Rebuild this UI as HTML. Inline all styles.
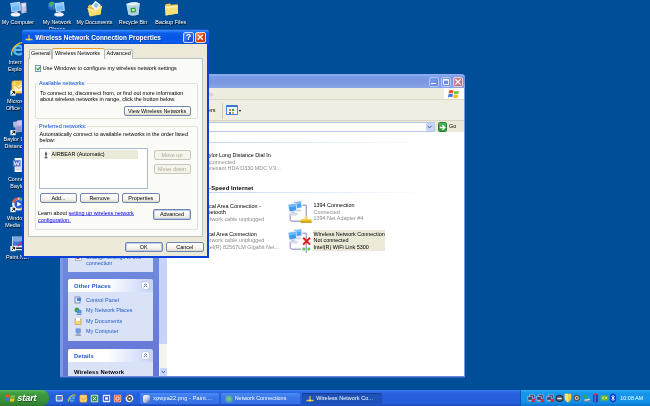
<!DOCTYPE html>
<html><head><meta charset="utf-8">
<style>
*{margin:0;padding:0;box-sizing:border-box}
html,body{width:650px;height:406px;overflow:hidden;background:#004e98}
body{font-family:"Liberation Sans",sans-serif;font-size:5.45px;color:#000;position:relative;line-height:1}
.a{position:absolute}
.t{position:absolute;white-space:nowrap;line-height:7px;height:7px}
.w{color:#fff}
.g{color:#8c8c8c}
.b{font-weight:bold}
.bb{font-weight:bold;font-size:5.8px;letter-spacing:.12px}
.btn{position:absolute;border:1px solid #7088b0;border-radius:2px;background:linear-gradient(#fff,#f3f2ea 70%,#dcd8c8);text-align:center;font-size:5.45px;line-height:8px;height:10px}
.btn.dis{border-color:#c9c7ba;color:#aca899;background:#f5f4ea}
.dl{position:absolute;color:#fff;text-align:center;font-size:5.4px;line-height:7px;width:44px;text-shadow:0.5px 0.5px 0.5px #000}
.ic{position:absolute;border-radius:2px}
.box{position:absolute;border:1px solid #e2e1d6;border-radius:2px}
.lk{color:#215dc6}
</style></head><body>
<div id="root" style="position:absolute;left:0;top:0;width:650px;height:406px;overflow:hidden;will-change:transform">

<!-- desktop icons top row -->
<svg class="a" style="left:9px;top:0" width="19" height="18" viewBox="0 0 19 18">
 <ellipse cx="6.5" cy="14.6" rx="4.8" ry="2" fill="#e8ecf8"/><ellipse cx="6.5" cy="14.2" rx="3.2" ry="1.2" fill="#fff"/>
 <path d="M12 3 L17.2 2.4 L17.6 12.4 L12.6 13.4Z" fill="#c4c4e6"/><path d="M13.2 4 L16.4 3.6 L16.5 6 L13.3 6.4Z" fill="#e8e8f8"/><path d="M11.2 3.4 L12 3 L12.6 13.4 L11.8 12.8Z" fill="#9c98cc"/>
 <path d="M1.2 3 L11 1.8 L11.8 10.6 L2.6 12.2Z" fill="#d4dcf4"/><path d="M2.2 3.8 L10.2 2.8 L10.8 10 L3.4 11.2Z" fill="#68b8f8"/><path d="M2.2 3.8 L10.2 2.8 L10.4 5.5 L2.6 7Z" fill="#8ccafb"/>
 <path d="M5.5 11.6 L8.5 11.2 L8.8 13.6 L5.2 13.8Z" fill="#c8cce4"/><circle cx="16.2" cy="11.3" r=".6" fill="#50c050"/>
</svg>
<div class="dl" style="left:-4px;top:19.3px">My Computer</div>
<svg class="a" style="left:47px;top:0" width="19" height="18" viewBox="0 0 19 18">
 <ellipse cx="12" cy="14.6" rx="4.8" ry="2" fill="#e8ecf8"/><ellipse cx="12" cy="14.2" rx="3.2" ry="1.2" fill="#fff"/>
 <circle cx="5.2" cy="5.8" r="4.4" fill="#2462d4"/><circle cx="4.4" cy="4.8" r="2.6" fill="#3c80e8"/><path d="M3.4 2.2 Q5.4 1.4 6.8 2.4 Q7.2 4 5.8 4.8 Q4.8 5 4.6 6.4 Q3.6 6.6 3 5.4 Q2.4 3.6 3.4 2.2Z" fill="#3cc03c"/><path d="M6.2 7 Q7.8 6.6 8.4 7.8 Q7.6 9.4 6.2 9.2Z" fill="#30a830"/>
 <path d="M7.6 3.2 L17 2 L17.8 10.8 L9 12.2Z" fill="#d4dcf4"/><path d="M8.6 4 L16.2 3 L16.8 10.2 L9.8 11.3Z" fill="#68b8f8"/><path d="M8.6 4 L16.2 3 L16.4 5.6 L9 7Z" fill="#8ccafb"/>
 <path d="M11 11.8 L14 11.4 L14.3 13.6 L10.7 13.8Z" fill="#c8cce4"/>
</svg>
<div class="dl" style="left:35px;top:19.3px">My Network<br>Places</div>
<svg class="a" style="left:86px;top:0" width="18" height="18" viewBox="0 0 18 18">
 <path d="M2 6 L4 4.5 L7 5.5 L15 5.5 L15 14 L3 15.5Z" fill="#e8c048"/>
 <path d="M5 6 L9.5 .8 L14.8 5 L10 11Z" fill="#f4f8fc"/><path d="M7.5 5.5 L9.8 2.6 L12.8 5 L10.3 8.3Z" fill="#8cbcf0"/>
 <path d="M1.5 8 L8.5 10.6 L16.2 5.8 L14.4 14.4 L4 16.4Z" fill="#f8dc70"/><path d="M1.5 8 L8.5 10.6 L16.2 5.8 L15.8 7.6 L8.6 12 L1.9 9.6Z" fill="#fcf0a8"/>
</svg>
<div class="dl" style="left:72.5px;top:19.3px">My Documents</div>
<svg class="a" style="left:124px;top:0" width="18" height="18" viewBox="0 0 18 18">
 <path d="M2.2 4 Q9 1 16 3.4 L14.4 14.4 Q9 16.4 4.4 14.6Z" fill="#c4dcea"/><path d="M2.2 4 Q9 1 16 3.4 Q9 6.4 2.2 4Z" fill="#e8f4fa"/><path d="M3.2 5.6 Q9 7.6 15.2 5 L14.4 14.4 Q9 16.4 4.4 14.6Z" fill="#b4d0e4"/>
 <path d="M6.5 8 L11.5 7.4 L12 12 L7 12.8Z" fill="#30a838"/><path d="M8 9.2 L10.4 8.9 L10.6 10.8 L8.3 11.2Z" fill="#d8f0d8"/>
</svg>
<div class="dl" style="left:111px;top:19.3px">Recycle Bin</div>
<svg class="a" style="left:163px;top:1px" width="17" height="16" viewBox="0 0 17 16">
 <path d="M2 4.2 L3 3 L7 2.6 L8 3.8 L14.6 3.2 L15 12.4 L2.6 14.4Z" fill="#e8c450"/><path d="M2 5.6 L14.8 4.4 L15 12.4 L2.6 14.4Z" fill="#f8e078"/><path d="M2 5.6 L14.8 4.4 L14.85 6 L2.1 7.4Z" fill="#fcf0b0"/>
</svg>
<div class="dl" style="left:148.8px;top:19.3px">Backup Files</div>

<!-- left column icons -->
<svg class="a" style="left:10px;top:41px" width="16" height="17" viewBox="0 0 16 17">
 <path d="M8.6 3.4 A5.6 5.6 0 1 0 13.6 11.6 L10.6 11.6 A3 3 0 0 1 5.6 10 L14 10 A5.6 5.6 0 0 0 8.6 3.4Z M5.6 7.8 A3 3 0 0 1 11.2 7.8Z" fill="#58b8f8"/>
 <path d="M2 14.5 Q0 10 6 4.5 Q11 .5 14.4 1.6 Q15.6 2.6 14 5" stroke="#f0c020" stroke-width="1.3" fill="none"/>
</svg>
<div class="dl" style="left:-4px;top:58.5px">Internet<br>Explorer</div>
<svg class="a" style="left:10px;top:79px" width="16" height="17" viewBox="0 0 16 17">
 <rect x="1.6" y="1.4" width="13" height="13" rx="2.4" fill="#f4b030"/><rect x="2.6" y="2.4" width="11" height="11" rx="1.8" fill="#fcd468"/>
 <path d="M4.4 5.8 L13.6 5.8 L13.6 12 L4.4 12Z" fill="#fff4c8"/><path d="M4.4 5.8 L9 9.4 L13.6 5.8" stroke="#e89818" stroke-width=".9" fill="none"/>
 <circle cx="8" cy="4.8" r="2.2" fill="#f8c040"/>
 <rect x=".4" y="11.4" width="5.2" height="5.2" fill="#fff"/><path d="M1.6 15.6 L4.4 12.8 M2.4 12.6 H4.6 V14.8" stroke="#000" stroke-width="1" fill="none"/>
</svg>
<div class="dl" style="left:-4px;top:97.5px">Microsoft<br>Office O...</div>
<svg class="a" style="left:10px;top:119px" width="16" height="17" viewBox="0 0 16 17">
 <path d="M3 3 L9 2 L9.4 7.6 L3.6 8.6Z" fill="#b8b8dc"/><path d="M7 1.6 L13.4 1 L13.6 6.4 L7.4 7.2Z" fill="#c8c8e4"/>
 <path d="M5 7 L12 6 L12.6 12.4 L5.8 13.6Z" fill="#a8acd4"/><path d="M6 8 L11.2 7.2 L11.6 11.6 L6.6 12.4Z" fill="#8c94d0"/>
 <path d="M12.2 8 L14 9.4 L12.6 11.6" fill="#48c048"/><path d="M12.6 11.4 L14.6 11.2 L14.6 14.4 L12.8 14.6Z" fill="#9c9cc8"/>
 <rect x=".4" y="11" width="5.2" height="5.2" fill="#fff"/><path d="M1.6 15.2 L4.4 12.4 M2.4 12.2 H4.6 V14.4" stroke="#000" stroke-width="1" fill="none"/>
</svg>
<div class="dl" style="left:-4px;top:135.8px">Baylor Long<br>Distance ...</div>
<svg class="a" style="left:10px;top:156px" width="16" height="17" viewBox="0 0 16 17">
 <path d="M4.6 2 L13.6 2 L13.6 16 L4.6 16Z" fill="#f4f6fc"/><path d="M11 2 L13.6 2 L13.6 16 L11 16Z" fill="#d4dcf0"/>
 <rect x="2.8" y="4.2" width="7.8" height="6.4" fill="#5078c8"/><path d="M4 5.6 L5.2 9.2 L6.6 6.4 L8 9.2 L9.4 5.6" stroke="#fff" stroke-width=".9" fill="none"/>
 <path d="M5.6 12 H12.6 M5.6 13.6 H12.6" stroke="#a8b8e0" stroke-width=".7"/>
</svg>
<div class="dl" style="left:-4px;top:175.5px">Connect<br>Baylor</div>
<svg class="a" style="left:10px;top:196px" width="16" height="17" viewBox="0 0 16 17">
 <circle cx="8.6" cy="8" r="6.6" fill="#e8eef8"/>
 <path d="M2.4 6.4 A6.6 6.6 0 0 1 8 1.4 L8.4 4 A4 4 0 0 0 4.8 7Z" fill="#e85838"/><path d="M9 1.4 A6.6 6.6 0 0 1 14.6 5.4 L12.2 6.6 A4 4 0 0 0 9.2 4Z" fill="#58b848"/><path d="M15 7 A6.6 6.6 0 0 1 11 14.2 L10 11.8 A4 4 0 0 0 12.4 7.6Z" fill="#f0b828"/>
 <circle cx="8.6" cy="8.2" r="4.2" fill="#2860d0"/><path d="M7.2 5.8 L11.4 8.2 L7.2 10.6Z" fill="#fff"/>
 <rect x=".4" y="11" width="5.2" height="5.2" fill="#fff"/><path d="M1.6 15.2 L4.4 12.4 M2.4 12.2 H4.6 V14.4" stroke="#000" stroke-width="1" fill="none"/>
</svg>
<div class="dl" style="left:-4px;top:214.5px">Windows<br>Media Pl...</div>
<svg class="a" style="left:10px;top:235px" width="16" height="17" viewBox="0 0 16 17">
 <rect x="2" y="1.6" width="12.6" height="13.6" fill="#f0f2f8"/><rect x="2.8" y="2.4" width="11.2" height="8.4" fill="#3c78d8"/><path d="M2.8 2.4 H14 V5 Q8 8 2.8 6Z" fill="#78a8ec"/>
 <path d="M7.6 11 L13.8 5.6" stroke="#d02030" stroke-width="1.2"/><rect x="6" y="12.4" width="8" height="1.6" fill="#283050"/>
 <rect x=".4" y="11" width="5.2" height="5.2" fill="#fff"/><path d="M1.6 15.2 L4.4 12.4 M2.4 12.2 H4.6 V14.4" stroke="#000" stroke-width="1" fill="none"/>
</svg>
<div class="dl" style="left:-3.7px;top:254px">Paint.NET</div>

<!-- ===== Network Connections window ===== -->
<div class="a" id="nc" style="left:60px;top:74px;width:405px;height:304px;background:#7b98e2;border-radius:4px 4px 0 0;overflow:hidden">
  <!-- title -->
  <div class="a" style="left:0;top:0;width:405px;height:14px;background:linear-gradient(#8fb0f2 0,#7a99e4 25%,#7b98e0 60%,#8aa6ea 100%)"></div>
  <!-- title buttons -->
  <div class="a" style="left:369px;top:3px;width:10px;height:10px;border:1px solid #b4c6f4;border-radius:2px;background:linear-gradient(135deg,#7c9cec,#6484dc)"></div>
  <div class="a" style="left:371.3px;top:9px;width:4.6px;height:1.4px;background:#fff"></div>
  <div class="a" style="left:381px;top:3px;width:10px;height:10px;border:1px solid #b4c6f4;border-radius:2px;background:linear-gradient(135deg,#7c9cec,#6484dc)"></div>
  <svg class="a" style="left:381px;top:3px" width="10" height="10"><path d="M2.4 2.6 H7.6 V7.6 H2.4Z" stroke="#fff" stroke-width=".9" fill="none"/><path d="M2.4 2.8 H7.6" stroke="#fff" stroke-width="1.6"/></svg>
  <div class="a" style="left:393px;top:3px;width:10px;height:10px;border:1px solid #e4c8d4;border-radius:2px;background:linear-gradient(135deg,#cc8c98,#b86878)"></div>
  <svg class="a" style="left:393px;top:3px" width="10" height="10"><path d="M2.4 2.4 L7.6 7.6 M7.6 2.4 L2.4 7.6" stroke="#fff" stroke-width="1.3"/></svg>
  <!-- menu bar -->
  <div class="a" style="left:2px;top:14px;width:402px;height:11px;background:#efede0"></div>
  <div class="a" style="left:384px;top:14px;width:20px;height:11px;background:#fff"></div>
  <svg class="a" style="left:388px;top:15px" width="12" height="10" viewBox="0 0 12 10"><path d="M1 1.5 Q3 .5 5.5 1.5 L5 4.6 Q3 3.6 .6 4.6Z" fill="#e8562a"/><path d="M6.3 1.7 Q8.5 2.7 11 1.7 L10.5 4.8 Q8.2 5.8 5.8 4.8Z" fill="#7cc040"/><path d="M.5 5.2 Q2.8 4.2 4.9 5.2 L4.4 8.3 Q2.4 7.3 0 8.3Z" fill="#3a78e0"/><path d="M5.7 5.4 Q8 6.4 10.4 5.4 L9.9 8.5 Q7.6 9.5 5.2 8.5Z" fill="#f8c020"/></svg>
  <div class="t" style="left:149.3px;top:17px;color:#b8b5a5">lp</div>
  <div class="a" style="left:2px;top:25px;width:402px;height:1px;background:#dcd8c6"></div>
  <!-- toolbar -->
  <div class="a" style="left:2px;top:26px;width:402px;height:21px;background:#f0eee2"></div>
  <div class="t" style="left:148px;top:33px">ers</div>
  <div class="a" style="left:162px;top:29px;width:1px;height:16px;background:#cfcbb8"></div>
  <div class="a" style="left:166px;top:31px;width:12px;height:10px;border:1px solid #4a84e0;border-top:2px solid #3a78e0;background:#f0f6ff;border-radius:1px"></div>
  <div class="a" style="left:169px;top:35px;width:2px;height:2px;background:#e07040;box-shadow:3px 0 #40a040,0 3px #4070d0,3px 3px #e0b030"></div>
  <div class="a" style="left:179.3px;top:35.5px;width:0;height:0;border:1.7px solid transparent;border-top:2.2px solid #000"></div>
  <div class="a" style="left:2px;top:46px;width:402px;height:1px;background:#d8d4c2"></div>
  <!-- address bar -->
  <div class="a" style="left:2px;top:47px;width:402px;height:11px;background:#ece9d8"></div>
  <div class="a" style="left:100px;top:47.5px;width:274.5px;height:10.5px;background:#fff;border:1px solid #b4c8e6"></div>
  <div class="a" style="left:366px;top:48.5px;width:7.5px;height:8.5px;background:#c6d6fb;border-radius:1px"></div>
  <svg class="a" style="left:366.3px;top:49px" width="7" height="8"><path d="M1.6 2.8 L3.5 5 L5.4 2.8" stroke="#4d6185" stroke-width="1" fill="none"/></svg>
  <div class="a" style="left:377.5px;top:48.3px;width:9.3px;height:9.3px;background:linear-gradient(#48b858,#2a983c);border-radius:1.5px;border:0.5px solid #2a7c38"></div>
  <svg class="a" style="left:377.7px;top:48.5px" width="9" height="9"><path d="M1.8 4.5 H6.5 M4.4 2.2 L6.9 4.5 L4.4 6.8" stroke="#fff" stroke-width="1.3" fill="none"/></svg>
  <div class="t" style="left:389px;top:49.2px">Go</div>
  <!-- side pane -->
  <div class="a" style="left:2px;top:58px;width:98px;height:244px;background:linear-gradient(#7ba2e7,#6375d6)"></div>
  <!-- main white -->
  <div class="a" style="left:107px;top:58px;width:297px;height:244px;background:#fff"></div>
  <!-- scrollbar -->
  <div class="a" style="left:99px;top:58px;width:8px;height:244px;background:#f4f4ee"></div>
  <div class="a" style="left:99px;top:58px;width:8px;height:212px;background:#c6d4fb;border-radius:0 0 1px 1px"></div>
  <div class="a" style="left:99.5px;top:294px;width:7px;height:7.5px;background:#c6d6fb;border-radius:1px"></div>
  <svg class="a" style="left:99.5px;top:294px" width="7" height="8"><path d="M1.8 2.8 L3.5 4.8 L5.2 2.8" stroke="#4d6185" stroke-width="1" fill="none"/></svg>

  <!-- side boxes -->
  <div class="a" style="left:0px;top:58px;width:3px;height:244px;background:#7f98e5"></div>
  <div class="a" style="left:8px;top:58px;width:85px;height:140px;background:#dae2f8"></div>
  <svg class="a" style="left:15px;top:180px" width="7" height="7"><rect x=".5" y=".5" width="6" height="6" fill="#fff" stroke="#7890c0" stroke-width=".6"/><rect x="1.5" y="2" width="3" height="3" fill="#d04040"/></svg>
  <div class="t lk" style="left:26px;top:179.5px">Change settings of this</div>
  <div class="t lk" style="left:26px;top:186px">connection</div>

  <div class="a" style="left:8px;top:205px;width:85px;height:13px;background:linear-gradient(90deg,#fff 0,#fff 45%,#c6d3f7);border-radius:2px 2px 0 0"></div>
  <div class="t bb" style="left:14px;top:208.5px;color:#215dc6">Other Places</div>
  <svg class="a" style="left:81px;top:207px" width="9" height="9"><circle cx="4.5" cy="4.5" r="4.1" fill="#fff" stroke="#a8b8e0" stroke-width=".6"/><path d="M2.8 4.2 L4.5 2.6 L6.2 4.2 M2.8 6.2 L4.5 4.6 L6.2 6.2" stroke="#3a5aa8" stroke-width=".8" fill="none"/></svg>
  <div class="a" style="left:8px;top:218px;width:85px;height:49px;background:#dae2f8"></div>
  <svg class="a" style="left:14px;top:222px" width="8" height="8"><rect x="1" y="1" width="5" height="6" fill="#e8e8f0" stroke="#5868a8" stroke-width=".7"/><rect x="3" y="2" width="4" height="3" fill="#4088e0"/></svg>
  <div class="t lk" style="left:26px;top:222.9px">Control Panel</div>
  <svg class="a" style="left:14px;top:232.5px" width="8" height="8"><circle cx="3" cy="3" r="2.5" fill="#40a060"/><rect x="3" y="3" width="4.5" height="3.5" fill="#5090e0"/><rect x="2.5" y="7" width="5" height="1" fill="#8090b0"/></svg>
  <div class="t lk" style="left:26px;top:233.1px">My Network Places</div>
  <svg class="a" style="left:14px;top:243px" width="8" height="8"><path d="M1 2 H7 V7.5 H1Z" fill="#f4d878" stroke="#b89030" stroke-width=".6"/><path d="M2 1 H6 V4 H2Z" fill="#fff"/></svg>
  <div class="t lk" style="left:26px;top:243.5px">My Documents</div>
  <svg class="a" style="left:14px;top:253.5px" width="8" height="8"><rect x="2" y=".8" width="4.5" height="4" fill="#58a0f0" stroke="#8090b8" stroke-width=".6"/><rect x="3" y="5" width="2.5" height="1.5" fill="#a0a8c0"/><rect x="1.5" y="6.5" width="5.5" height="1.2" fill="#8088a8"/></svg>
  <div class="t lk" style="left:26px;top:253.8px">My Computer</div>

  <div class="a" style="left:8px;top:275px;width:85px;height:13px;background:linear-gradient(90deg,#fff 0,#fff 45%,#c6d3f7);border-radius:2px 2px 0 0"></div>
  <div class="t bb" style="left:14px;top:278.5px;color:#215dc6">Details</div>
  <svg class="a" style="left:81px;top:277px" width="9" height="9"><circle cx="4.5" cy="4.5" r="4.1" fill="#fff" stroke="#a8b8e0" stroke-width=".6"/><path d="M2.8 4.2 L4.5 2.6 L6.2 4.2 M2.8 6.2 L4.5 4.6 L6.2 6.2" stroke="#3a5aa8" stroke-width=".8" fill="none"/></svg>
  <div class="a" style="left:8px;top:288px;width:85px;height:14px;background:#dae2f8"></div>
  <div class="t bb" style="left:14px;top:295px">Wireless Network</div>

  <!-- main content -->
  <div class="a" style="left:148px;top:68px;width:220px;height:1px;background:linear-gradient(90deg,#c4d6f6,#fff)"></div>
  <div class="t" style="right:194.3px;top:78px">Baylor Long Distance Dial In</div>
  <div class="t g" style="right:229.8px;top:84.5px">Disconnected</div>
  <div class="t g" style="right:184.1px;top:91px">Conexant HDA D330 MDC V.9...</div>
  <div class="t bb" style="right:211.7px;top:110.8px">LAN or High-Speed Internet</div>
  <div class="a" style="left:148px;top:118px;width:220px;height:1px;background:linear-gradient(90deg,#c4d6f6,#fff)"></div>
  <div class="t" style="right:204.1px;top:128.5px">Local Area Connection -</div>
  <div class="t" style="right:239.3px;top:135px">Bluetooth</div>
  <div class="t g" style="right:200.7px;top:141.5px">Network cable unplugged</div>
  <div class="t" style="right:208.3px;top:156.5px">Local Area Connection</div>
  <div class="t g" style="right:200.7px;top:163px">Network cable unplugged</div>
  <div class="t g" style="right:186px;top:169.5px">Intel(R) 82567LM Gigabit Net...</div>

  <!-- 1394 -->
  <svg class="a" style="left:226px;top:125px" width="27" height="27" viewBox="0 0 27 27"><path d="M16.4 6.2 H20.2 V20" stroke="#7c74b8" stroke-width=".9" fill="none"/><path d="M4.2 15.4 V20.6 Q4.2 22.2 6 22.2 H15" stroke="#7c74b8" stroke-width=".9" fill="none"/><path d="M7.4 2.6 L15.6 1.4 L16.4 8.8 L8.6 10.4Z" fill="#dfe6f8"/><path d="M8.4 3.4 L14.8 2.4 L15.4 8.2 L9.4 9.4Z" fill="#4aa4f4"/><path d="M8.4 3.4 L14.8 2.4 L15 4.6 L8.7 5.8Z" fill="#7cc0f8"/><path d="M1.6 5.2 L10.2 3.8 L11.2 11.8 L3 13.4Z" fill="#e4eafa"/><path d="M2.6 6 L9.4 4.8 L10.2 11.2 L3.8 12.4Z" fill="#3c9cf4"/><path d="M2.6 6 L9.4 4.8 L9.7 7.2 L3 8.6Z" fill="#74bcf8"/><path d="M5.6 12.8 L8.4 12.4 L8.8 14 L5.4 14.4Z" fill="#b4b8d4"/><ellipse cx="7.4" cy="15" rx="4.4" ry="1.5" fill="#d4d8ea"/><ellipse cx="12.6" cy="11.6" rx="3" ry="1" fill="#d0d4e8"/><rect x="18.6" y="17.4" width="3.2" height="3.4" fill="#f4dc70"/><rect x="14.6" y="20.2" width="11" height="3.6" rx=".6" fill="#f0c428"/><rect x="14.6" y="22.4" width="11" height="1.4" fill="#c89c18"/></svg>
  <div class="t" style="left:253.5px;top:128.4px">1394 Connection</div>
  <div class="t g" style="left:253.5px;top:134.9px">Connected</div>
  <div class="t g" style="left:253.5px;top:141.4px">1394 Net Adapter #4</div>
  <!-- wireless -->
  <svg class="a" style="left:226px;top:153px" width="27" height="27" viewBox="0 0 27 27"><path d="M16.4 6.2 H20.2 V26" stroke="#7c74b8" stroke-width=".9" fill="none"/><path d="M4.2 15.4 V20.6 Q4.2 22.2 6 22.2 H15" stroke="#7c74b8" stroke-width=".9" fill="none"/><path d="M7.4 2.6 L15.6 1.4 L16.4 8.8 L8.6 10.4Z" fill="#dfe6f8"/><path d="M8.4 3.4 L14.8 2.4 L15.4 8.2 L9.4 9.4Z" fill="#4aa4f4"/><path d="M8.4 3.4 L14.8 2.4 L15 4.6 L8.7 5.8Z" fill="#7cc0f8"/><path d="M1.6 5.2 L10.2 3.8 L11.2 11.8 L3 13.4Z" fill="#e4eafa"/><path d="M2.6 6 L9.4 4.8 L10.2 11.2 L3.8 12.4Z" fill="#3c9cf4"/><path d="M2.6 6 L9.4 4.8 L9.7 7.2 L3 8.6Z" fill="#74bcf8"/><path d="M5.6 12.8 L8.4 12.4 L8.8 14 L5.4 14.4Z" fill="#b4b8d4"/><ellipse cx="7.4" cy="15" rx="4.4" ry="1.5" fill="#d4d8ea"/><ellipse cx="12.6" cy="11.6" rx="3" ry="1" fill="#d0d4e8"/><path d="M17.2 10.8 L24 17.6 M24 10.8 L17.2 17.6" stroke="#e41c1c" stroke-width="2"/><rect x="16.4" y="20.6" width="2.8" height="2.8" fill="#58c858"/><rect x="21.4" y="20.6" width="2.8" height="2.8" fill="#58c858"/></svg>
  <div class="a" style="left:253px;top:156px;width:72px;height:20.5px;background:#ece9d8"></div>
  <div class="t" style="left:253.5px;top:156.5px">Wireless Network Connection</div>
  <div class="t" style="left:253.5px;top:163px">Not connected</div>
  <div class="t" style="left:253.5px;top:169.5px">Intel(R) WiFi Link 5300</div>
  <!-- bottom border -->
  <div class="a" style="left:0;top:302px;width:405px;height:2px;background:linear-gradient(#7088dc 0,#7088dc 1px,#3064bc 1px)"></div>
</div>

<!-- ===== Dialog ===== -->
<div class="a" id="dlg" style="left:22px;top:29px;width:187px;height:229px;background:#0a42d8;border-radius:4px 4px 0 0;overflow:hidden">
  <div class="a" style="left:0;top:0;width:187px;height:15px;background:linear-gradient(#1656c0 0,#1656c0 1px,#3a8cfa 1.2px,#0a5eea 4px,#0654e2 9px,#0a60f0 13px,#0448c8 15px)"></div>
  <div class="a" style="left:2px;top:15px;width:183px;height:212px;background:#ece9d8"></div>
  <div class="a" style="left:1px;top:1px;width:185px;height:227px;font-size:5.45px">
  <svg class="a" style="left:1.5px;top:3.5px" width="8" height="8" viewBox="0 0 9 9"><path d="M4.5 1 V6" stroke="#f0c838" stroke-width="1.2"/><path d="M.5 6.2 H8.5" stroke="#f0c838" stroke-width="1.6"/><circle cx="4.5" cy="6.2" r="1.2" fill="#f8e070"/></svg>
  <div class="t w b" style="left:12.3px;top:3.9px;font-size:6.5px;text-shadow:.5px .5px 0 rgba(10,42,128,.6)">Wireless Network Connection Properties</div>
  <div class="a" style="left:160.3px;top:2px;width:10.5px;height:10.5px;border:.7px solid #c8d8fc;border-radius:2px;background:linear-gradient(135deg,#5a96fa,#1c50d8 70%)"></div>
  <div class="t w b" style="left:163.1px;top:3.6px;font-size:8.6px">?</div>
  <div class="a" style="left:172.2px;top:2px;width:10.5px;height:10.5px;border:.7px solid #f8d8d0;border-radius:2px;background:linear-gradient(135deg,#f09878,#dc4414 50%,#c83208)"></div>
  <svg class="a" style="left:172.2px;top:2px" width="10.5" height="10.5"><path d="M2.7 2.7 L7.8 7.8 M7.8 2.7 L2.7 7.8" stroke="#fff" stroke-width="1.3"/></svg>
  <!-- tab panel -->
  <div class="a" style="left:5px;top:28px;width:175px;height:179px;background:#fbfbf8;border:1px solid #c0c4c0"></div>
  <!-- tabs -->
  <div class="a" style="left:5.5px;top:19px;width:23.5px;height:9.5px;background:#f8f8f4;border:1px solid #b8bcb8;border-bottom:none;border-radius:2px 2px 0 0"></div>
  <div class="t" style="left:8px;top:20.3px">General</div>
  <div class="a" style="left:81px;top:19px;width:29px;height:9.5px;background:#f8f8f4;border:1px solid #b8bcb8;border-bottom:none;border-radius:2px 2px 0 0"></div>
  <div class="t" style="left:83.5px;top:20.3px">Advanced</div>
  <div class="a" style="left:28.5px;top:18px;width:53px;height:11px;background:#fcfcfa;border:1px solid #b8bcb8;border-bottom:none;border-top:1.5px solid #f0a020;border-radius:2px 2px 0 0"></div>
  <div class="t" style="left:32px;top:20px">Wireless Networks</div>
  <!-- checkbox -->
  <div class="a" style="left:11.6px;top:35px;width:6.4px;height:6.6px;background:#f4f4f0;border:1px solid #7c98b4"></div>
  <svg class="a" style="left:11.5px;top:35px" width="7" height="7"><path d="M1.6 3.4 L3 4.9 L5.4 1.9" stroke="#21a121" stroke-width="1.1" fill="none"/></svg>
  <div class="t" style="left:19.8px;top:34.8px">Use Windows to configure my wireless network settings</div>
  <!-- group 1 -->
  <div class="box" style="left:12px;top:52.6px;width:163px;height:36.6px"></div>
  <div class="t" style="left:15px;top:49.5px;background:#fbfbf8;color:#0046d5;padding:0 1px">Available networks:</div>
  <div class="t" style="left:17px;top:59.5px">To connect to, disconnect from, or find out more information</div>
  <div class="t" style="left:17px;top:66px">about wireless networks in range, click the button below.</div>
  <div class="btn" style="left:100.5px;top:76px;width:67px">View Wireless Networks</div>
  <!-- group 2 -->
  <div class="box" style="left:12px;top:96px;width:163px;height:103.5px"></div>
  <div class="t" style="left:15px;top:92.5px;background:#fbfbf8;color:#0046d5;padding:0 1px">Preferred networks:</div>
  <div class="t" style="left:16.5px;top:100.5px">Automatically connect to available networks in the order listed</div>
  <div class="t" style="left:16.5px;top:107px">below:</div>
  <div class="a" style="left:16px;top:118px;width:109px;height:41px;background:#fff;border:1px solid #a9bdd0"></div>
  <div class="a" style="left:28px;top:119.5px;width:87px;height:9px;background:#ece9d8"></div>
  <svg class="a" style="left:20px;top:120.5px" width="6" height="8"><path d="M3 .8 V6 M1.5 6.8 H4.5 M1.8 3 H4.2" stroke="#222" stroke-width=".9"/></svg>
  <div class="t" style="left:28.5px;top:120.8px">AIRBEAR (Automatic)</div>
  <div class="btn dis" style="left:130.5px;top:120px;width:37px">Move up</div>
  <div class="btn dis" style="left:130.5px;top:134px;width:37px">Move down</div>
  <div class="btn" style="left:17px;top:163px;width:37px">Add...</div>
  <div class="btn" style="left:57.3px;top:163px;width:38.5px">Remove</div>
  <div class="btn" style="left:99px;top:163px;width:37.5px">Properties</div>
  <div class="t" style="left:15px;top:180px">Learn about <span class="lk" style="color:#0000e0;background:linear-gradient(rgba(0,0,224,.5),rgba(0,0,224,.5)) 0 5.4px/100% 1px no-repeat">setting up wireless network</span></div>
  <div class="t" style="left:15px;top:186.5px"><span style="color:#0000e0;background:linear-gradient(rgba(0,0,224,.5),rgba(0,0,224,.5)) 0 5.4px/100% 1px no-repeat">configuration.</span></div>
  <div class="btn" style="left:130px;top:179px;width:38px;height:11px;line-height:9px;box-shadow:inset 0 0 0 1px #b8cdf0">Advanced</div>
  <!-- ok cancel -->
  <div class="btn" style="left:102px;top:211.5px;width:37.5px;height:10.7px;line-height:8.6px;box-shadow:inset 0 0 0 1px #b8cdf0">OK</div>
  <div class="btn" style="left:143px;top:211.5px;width:37.5px;height:10.7px;line-height:8.6px">Cancel</div>
  </div>
</div>

<!-- ===== Taskbar ===== -->
<div class="a" style="left:0;top:390px;width:650px;height:16px;background:linear-gradient(#3a80f0 0,#2a68e4 12%,#245edb 35%,#2560dc 80%,#1c48b8 100%)"></div>
<div class="a" style="left:0;top:390px;width:49px;height:16px;background:linear-gradient(#5cb85c 0,#3f9b3f 20%,#378f37 70%,#2e7a2e 100%);border-radius:0 7px 7px 0"></div>
<svg class="a" style="left:4.5px;top:393px" width="11" height="10" viewBox="0 0 12 10"><path d="M1 1.5 Q3 .5 5.5 1.5 L5 4.6 Q3 3.6 .6 4.6Z" fill="#e8562a"/><path d="M6.3 1.7 Q8.5 2.7 11 1.7 L10.5 4.8 Q8.2 5.8 5.8 4.8Z" fill="#7cc040"/><path d="M.5 5.2 Q2.8 4.2 4.9 5.2 L4.4 8.3 Q2.4 7.3 0 8.3Z" fill="#3a78e0"/><path d="M5.7 5.4 Q8 6.4 10.4 5.4 L9.9 8.5 Q7.6 9.5 5.2 8.5Z" fill="#f8c020"/></svg>
<div class="t w b" style="left:17.3px;top:392.6px;font-size:9.2px;font-style:italic;line-height:10px;height:10px;letter-spacing:-.15px;text-shadow:.5px .5px .5px #1a4a1a">start</div>
<!-- quick launch -->
<svg class="a" style="left:55px;top:393.5px" width="9" height="9" viewBox="0 0 9 9"><rect x=".8" y="1" width="7" height="6.6" rx="1" fill="#e8f0fc"/><rect x="1.8" y="2" width="5" height="4.4" fill="#4880e0"/><path d="M5 5.5 L8 1.5" stroke="#e06040" stroke-width="1"/></svg>
<svg class="a" style="left:67px;top:393.5px" width="9" height="9" viewBox="0 0 16 17"><path d="M8.6 3.4 A5.6 5.6 0 1 0 13.6 11.6 L10.6 11.6 A3 3 0 0 1 5.6 10 L14 10 A5.6 5.6 0 0 0 8.6 3.4Z M5.6 7.8 A3 3 0 0 1 11.2 7.8Z" fill="#58b8f8"/><path d="M2 14.5 Q0 10 6 4.5 Q11 .5 14.4 1.6 Q15.6 2.6 14 5" stroke="#f0c020" stroke-width="1.8" fill="none"/></svg>
<svg class="a" style="left:78.5px;top:393.5px" width="9" height="9" viewBox="0 0 9 9"><rect x=".6" y=".8" width="7.6" height="7.6" rx="1.4" fill="#f4b030"/><rect x="1.4" y="1.6" width="6" height="6" rx="1" fill="#fcd878"/><path d="M2.2 4 L4.4 5.8 L6.6 4" stroke="#e08810" stroke-width=".8" fill="none"/></svg>
<svg class="a" style="left:90px;top:393.5px" width="9" height="9" viewBox="0 0 9 9"><rect x=".8" y=".8" width="7.4" height="7.4" rx="1" fill="#e8f4e8"/><rect x="1.6" y="1.6" width="5.8" height="5.8" fill="#2c9044"/><path d="M3 2.8 L6 6.2 M6 2.8 L3 6.2" stroke="#fff" stroke-width="1"/></svg>
<svg class="a" style="left:101.5px;top:393.5px" width="9" height="9" viewBox="0 0 9 9"><rect x=".8" y=".8" width="7.4" height="7.4" rx="1" fill="#e8eefc"/><rect x="1.8" y="2.2" width="5.4" height="4.6" fill="#3858b0"/><rect x="3" y="3.4" width="3" height="2.2" fill="#fff"/></svg>
<svg class="a" style="left:113px;top:393.5px" width="9" height="9" viewBox="0 0 9 9"><rect x=".8" y=".8" width="7.4" height="7.4" rx="1.2" fill="#f8b8a0"/><rect x="1.6" y="1.6" width="5.8" height="5.8" rx=".8" fill="#e85028"/><path d="M3 3 H6 V6 H3Z" fill="none" stroke="#fff" stroke-width=".8"/></svg>
<svg class="a" style="left:125px;top:393.5px" width="9" height="9" viewBox="0 0 9 9"><circle cx="4.5" cy="4.5" r="3.8" fill="#f4f4f4"/><circle cx="4.5" cy="4.5" r="2.4" fill="#303848"/><circle cx="4.5" cy="4.5" r="1.1" fill="#fff"/><path d="M1 3 A3.8 3.8 0 0 1 4.5 .7" stroke="#e04830" stroke-width="1" fill="none"/><path d="M8 6 A3.8 3.8 0 0 1 4.5 8.3" stroke="#40a848" stroke-width="1" fill="none"/></svg>
<!-- task buttons -->
<div class="a" style="left:139.5px;top:392.5px;width:79px;height:11.5px;background:linear-gradient(#4a8cf4,#3a78ea 40%,#3570e4);border-radius:1.5px"></div>
<div class="ic" style="left:143px;top:394.5px;width:7px;height:8px;background:linear-gradient(135deg,#fff,#c8d0e8 50%,#3858a8)"></div>
<div class="t w" style="left:153.3px;top:395px;letter-spacing:.16px">xpwpa22.png - Paint....</div>
<div class="a" style="left:220.5px;top:392.5px;width:79px;height:11.5px;background:linear-gradient(#4a8cf4,#3a78ea 40%,#3570e4);border-radius:1.5px"></div>
<div class="ic" style="left:225px;top:394.5px;width:8px;height:8px;background:radial-gradient(#80d080,#3878d0);border-radius:4px"></div>
<div class="t w" style="left:234.7px;top:395px">Network Connections</div>
<div class="a" style="left:301.5px;top:392.5px;width:80.5px;height:11.5px;background:#1e52b7;border-radius:1.5px;box-shadow:inset 0 1px 1px #163e90"></div>
<svg class="a" style="left:306.3px;top:394.5px" width="8" height="8" viewBox="0 0 9 9"><path d="M4.5 1 V6" stroke="#f0c838" stroke-width="1.2"/><path d="M.5 6.2 H8.5" stroke="#f0c838" stroke-width="1.6"/><circle cx="4.5" cy="6.2" r="1.2" fill="#f8e070"/></svg>
<div class="t w" style="left:316.2px;top:395px;letter-spacing:.07px">Wireless Network Co...</div>
<!-- tray -->
<div class="a" style="left:520px;top:390px;width:130px;height:16px;background:linear-gradient(#2ab0f6 0,#1696ea 18%,#1190e8 75%,#0c74cc 100%);border-left:1px solid #0a58b8"></div>
<svg class="a" style="left:526.5px;top:393.5px" width="9" height="9" viewBox="0 0 9 9"><rect x="2.6" y=".8" width="4.6" height="3.6" fill="#384070" stroke="#b8c0d8" stroke-width=".6"/><rect x=".8" y="2.6" width="4.6" height="3.6" fill="#404878" stroke="#c0c8e0" stroke-width=".6"/><rect x="1.6" y="6.6" width="3" height=".9" fill="#c0c4d4"/><path d="M4.6 5 L7.8 8.2 M7.8 5 L4.6 8.2" stroke="#e81818" stroke-width="1.1"/></svg>
<svg class="a" style="left:536px;top:393.5px" width="9" height="9" viewBox="0 0 9 9"><rect x="2.6" y=".8" width="4.6" height="3.6" fill="#384070" stroke="#b8c0d8" stroke-width=".6"/><rect x=".8" y="2.6" width="4.6" height="3.6" fill="#404878" stroke="#c0c8e0" stroke-width=".6"/><rect x="1.6" y="6.6" width="3" height=".9" fill="#c0c4d4"/><path d="M4.6 5 L7.8 8.2 M7.8 5 L4.6 8.2" stroke="#e81818" stroke-width="1.1"/></svg>
<svg class="a" style="left:545.5px;top:393.5px" width="9" height="9" viewBox="0 0 9 9"><rect x="2.6" y=".8" width="4.6" height="3.6" fill="#384070" stroke="#b8c0d8" stroke-width=".6"/><rect x=".8" y="2.6" width="4.6" height="3.6" fill="#404878" stroke="#c0c8e0" stroke-width=".6"/><rect x="1.6" y="6.6" width="3" height=".9" fill="#c0c4d4"/><path d="M4.6 5 L7.8 8.2 M7.8 5 L4.6 8.2" stroke="#e81818" stroke-width="1.1"/></svg>
<svg class="a" style="left:554.5px;top:393.5px" width="9" height="9" viewBox="0 0 9 9"><ellipse cx="4.5" cy="4.5" rx="4" ry="3.4" fill="#282c38"/><ellipse cx="4.5" cy="4.5" rx="3" ry="2.2" fill="#606878"/><path d="M2.4 4.5 H6.6" stroke="#f0f0f4" stroke-width="1.2"/></svg>
<svg class="a" style="left:563.5px;top:393px" width="8" height="10" viewBox="0 0 8 10"><path d="M.8 .8 H7.2 V5.6 Q6.8 8 4 9.4 Q1.2 8 .8 5.6Z" fill="#f4cc48"/><path d="M.8 .8 H4 V9.4 Q1.2 8 .8 5.6Z" fill="#fce088"/></svg>
<svg class="a" style="left:572.5px;top:393.5px" width="9" height="9" viewBox="0 0 9 9"><circle cx="3.8" cy="4" r="3.2" fill="#585450"/><circle cx="3.8" cy="4" r="2" fill="#d8d0c0"/><circle cx="3.8" cy="4" r=".9" fill="#484440"/><path d="M5.6 7.6 L8 5.4" stroke="#7c90e0" stroke-width="1"/></svg>
<svg class="a" style="left:581.5px;top:393.5px" width="9" height="9" viewBox="0 0 9 9"><path d="M1 1.2 L5 1 L4.4 3.2 L6 4.6 L3.6 5 Z" fill="#30b030"/><path d="M2.4 5.6 L7.8 4.6 L8.2 7 L3 8.2Z" fill="#d0d4dc"/><path d="M3 7 L8 6 L8.2 7 L3 8.2Z" fill="#70788c"/></svg>
<svg class="a" style="left:592px;top:393px" width="7" height="10" viewBox="0 0 7 10"><rect x="1.2" y="1.6" width="4.6" height="7.6" rx=".8" fill="#2830a0"/><rect x="2.4" y="1.6" width="1.4" height="7.6" fill="#6870e0"/><rect x="2" y=".6" width="3" height="1.6" fill="#d03030"/></svg>
<svg class="a" style="left:600px;top:394px" width="9" height="8" viewBox="0 0 9 8"><rect x=".6" y="1.4" width="7.8" height="5.2" fill="#68b020"/><path d="M1.6 4 Q3 2.2 5 2.6 Q7 3 7.4 4 Q6 5.8 4 5.4 Q2.4 5.2 1.6 4Z" fill="#c8e890"/><circle cx="4.4" cy="4" r="1" fill="#68b020"/></svg>
<svg class="a" style="left:609px;top:393px" width="8" height="10" viewBox="0 0 8 10"><ellipse cx="4" cy="5" rx="3.2" ry="4.4" fill="#1838d8"/><path d="M2.4 3.4 L5.4 6.2 L4 7.6 V2.4 L5.4 3.8 L2.4 6.6" stroke="#fff" stroke-width=".8" fill="none"/></svg>
<div class="t w" style="left:620.3px;top:395px">10:08 AM</div>
</div>
</body></html>
